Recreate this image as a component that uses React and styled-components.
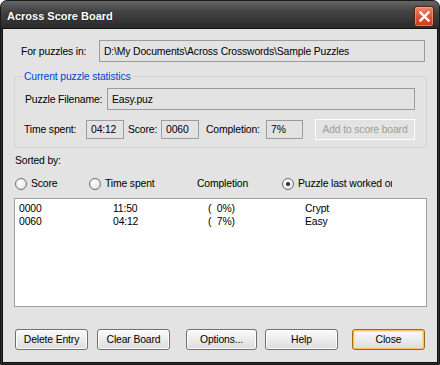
import styled, { createGlobalStyle } from "styled-components";

const GlobalStyle = createGlobalStyle`
  html, body {
    margin: 0;
    padding: 0;
    background: #ffffff;
  }
`;

const Window = styled.div`
  width: 440px;
  height: 365px;
  box-sizing: border-box;
  display: flex;
  flex-direction: column;
  border: 1px solid #1a1a1a;
  border-radius: 7px 7px 0 0;
  background: linear-gradient(#666666 0px, #444444 10px, #2a2a2a 27px, #2c2c2c 40px);
  overflow: hidden;
  font-family: "Liberation Sans", Arial, sans-serif;
  font-size: 10.4px;
  letter-spacing: -0.15px;
  color: #000;
`;

const TitleBar = styled.div`
  height: 28px;
  flex: none;
  display: flex;
  align-items: center;
  justify-content: space-between;
  padding: 0 5px 0 6px;
`;

const Title = styled.span`
  font-weight: bold;
  font-size: 11px;
  letter-spacing: 0;
  color: #ffffff;
  text-shadow: 0 0 2px rgba(0, 0, 0, 0.6);
  margin-top: 2px;
`;

const CloseX = styled.div`
  width: 18px;
  height: 19px;
  margin-top: 2px;
  border: 1px solid #5a2010;
  border-radius: 3px;
  background: linear-gradient(#f08a70, #d95634 50%, #c8401c);
  box-shadow: inset 0 0 0 1px rgba(255, 200, 180, 0.45);
  display: flex;
  align-items: center;
  justify-content: center;
`;

const Client = styled.div`
  flex: 1;
  margin: 0 2px 2px 2px;
  background: #e3e3e3;
  padding: 11px 10px 0 11px;
  display: flex;
  flex-direction: column;
  box-shadow: 0 0 0 1px #111;
`;

const Row = styled.div`
  display: flex;
  align-items: center;
  margin-top: ${(p) => p.$mt || 0}px;
  height: ${(p) => p.$h || 13}px;
`;

const Label = styled.span`
  flex: none;
  width: ${(p) => (p.$w ? `${p.$w}px` : "auto")};
  margin-left: ${(p) => p.$ml || 0}px;
  line-height: 13px;
  white-space: nowrap;
`;

const Field = styled.div`
  flex: none;
  box-sizing: border-box;
  width: ${(p) => p.$w}px;
  height: ${(p) => p.$h || 22}px;
  border: 1px solid #9c9c9c;
  background: #e3e3e3;
  padding-left: 4px;
  display: flex;
  align-items: center;
  white-space: nowrap;
`;

const Group = styled.div`
  margin-top: 14px;
  border: 1px solid #d4d4cc;
  border-radius: 3px;
  padding: 0 0 7px 9px;
  display: flex;
  flex-direction: column;
`;

const Caption = styled.span`
  align-self: flex-start;
  margin: -7px 0 0 -2px;
  padding: 0 2px;
  background: #e3e3e3;
  color: #0046d5;
  line-height: 13px;
`;

const DisabledButton = styled.div`
  flex: none;
  box-sizing: border-box;
  width: 100px;
  height: 21px;
  margin-left: 12px;
  border: 1px solid #ffffff;
  background: #e3e3e3;
  color: #a0a08c;
  display: flex;
  align-items: center;
  justify-content: center;
  white-space: nowrap;
`;

const RadioItem = styled.div`
  flex: none;
  width: ${(p) => p.$w}px;
  display: flex;
  align-items: center;
  margin-left: ${(p) => p.$ml || 0}px;
  white-space: nowrap;
  overflow: hidden;
`;

const Circle = styled.span`
  flex: none;
  box-sizing: border-box;
  width: 12px;
  height: 12px;
  border-radius: 50%;
  border: 1px solid #6e6e6e;
  background: radial-gradient(circle at 40% 35%, #ffffff, #dcdcdc);
  margin-right: 4px;
  display: flex;
  align-items: center;
  justify-content: center;

  &::after {
    content: "";
    display: ${(p) => (p.$on ? "block" : "none")};
    width: 4px;
    height: 4px;
    border-radius: 50%;
    background: #2a2a2a;
  }
`;

const ListBox = styled.div`
  margin-top: 8px;
  width: 413px;
  height: 109px;
  box-sizing: border-box;
  border: 1px solid #a0a0a0;
  background: #ffffff;
  padding: 3px 0 0 4px;
`;

const ListRow = styled.div`
  display: grid;
  grid-template-columns: 94px 95px 97px auto;
  line-height: 13px;
  white-space: pre;
`;

const ButtonBar = styled.div`
  margin-top: 22px;
  display: flex;
  padding-left: 1px;
`;

const Button = styled.div`
  flex: none;
  box-sizing: border-box;
  width: ${(p) => p.$w || 73}px;
  height: 21px;
  margin-left: ${(p) => p.$ml || 0}px;
  border: 1px solid ${(p) => (p.$default ? "#a06a10" : "#707070")};
  border-radius: 3px;
  background: linear-gradient(#fbfbfb, #ececec 50%, #dcdcdc);
  box-shadow: ${(p) =>
    p.$default ? "inset 0 0 0 1px #f8c060, inset 0 0 0 2px #fbe0a8" : "inset 0 0 0 1px #fff"};
  display: flex;
  align-items: center;
  justify-content: center;
  white-space: nowrap;
`;

const rows = [
  ["0000", "11:50", "(  0%)", "Crypt"],
  ["0060", "04:12", "(  7%)", "Easy"],
];

export default function App() {
  return (
    <>
      <GlobalStyle />
      <Window>
        <TitleBar>
          <Title>Across Score Board</Title>
          <CloseX>
            <svg width="11" height="11" viewBox="0 0 11 11">
              <path d="M1.5 1.5 L9.5 9.5 M9.5 1.5 L1.5 9.5" stroke="#fff" strokeWidth="2.4" strokeLinecap="square" />
            </svg>
          </CloseX>
        </TitleBar>
        <Client>
          <Row $h={22}>
            <Label $w={78} $ml={7}>For puzzles in:</Label>
            <Field $w={326}>D:\My Documents\Across Crosswords\Sample Puzzles</Field>
          </Row>
          <Group>
            <Caption>Current puzzle statistics</Caption>
            <Row $h={22} $mt={5}>
              <Label $w={82} $ml={1}>Puzzle Filename:</Label>
              <Field $w={308}>Easy.puz</Field>
            </Row>
            <Row $h={21} $mt={9}>
              <Label $w={62}>Time spent:</Label>
              <Field $w={38} $h={19}>04:12</Field>
              <Label $w={33} $ml={4}>Score:</Label>
              <Field $w={38} $h={19}>0060</Field>
              <Label $w={60} $ml={7}>Completion:</Label>
              <Field $w={37} $h={19}>7%</Field>
              <DisabledButton>Add to score board</DisabledButton>
            </Row>
          </Group>
          <Row $mt={6}>
            <Label $ml={1}>Sorted by:</Label>
          </Row>
          <Row $mt={10}>
            <RadioItem $w={74} $ml={1}>
              <Circle />
              Score
            </RadioItem>
            <RadioItem $w={108}>
              <Circle />
              Time spent
            </RadioItem>
            <RadioItem $w={85}>Completion</RadioItem>
            <RadioItem $w={110}>
              <Circle $on />
              Puzzle last worked on
            </RadioItem>
          </Row>
          <ListBox>
            {rows.map((r) => (
              <ListRow key={r[0]}>
                {r.map((c, i) => (
                  <span key={i}>{c}</span>
                ))}
              </ListRow>
            ))}
          </ListBox>
          <ButtonBar>
            <Button>Delete Entry</Button>
            <Button $ml={9}>Clear Board</Button>
            <Button $ml={16} $w={71}>Options...</Button>
            <Button $ml={8}>Help</Button>
            <Button $ml={14} $default>Close</Button>
          </ButtonBar>
        </Client>
      </Window>
    </>
  );
}
